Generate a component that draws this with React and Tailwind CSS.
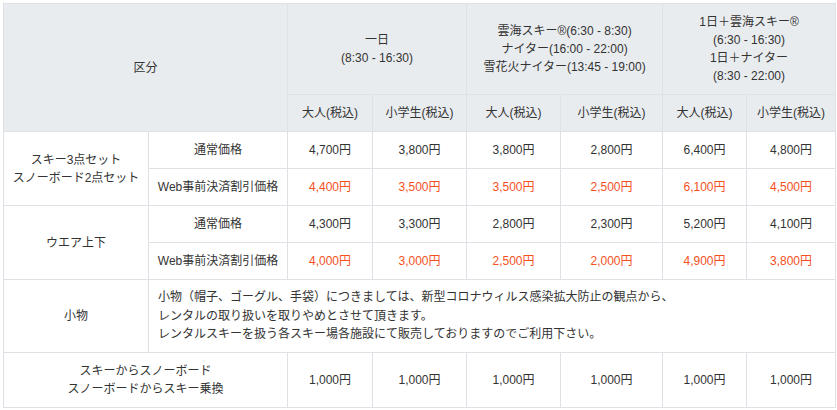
import React from 'react';

const ROWS = [
  {
    group: ['スキー3点セット', 'スノーボード2点セット'],
    items: [
      { label: '通常価格', prices: ['4,700円', '3,800円', '3,800円', '2,800円', '6,400円', '4,800円'] },
      { label: 'Web事前決済割引価格', web: true, prices: ['4,400円', '3,500円', '3,500円', '2,500円', '6,100円', '4,500円'] },
    ],
  },
  {
    group: ['ウエア上下'],
    items: [
      { label: '通常価格', prices: ['4,300円', '3,300円', '2,800円', '2,300円', '5,200円', '4,100円'] },
      { label: 'Web事前決済割引価格', web: true, prices: ['4,000円', '3,000円', '2,500円', '2,000円', '4,900円', '3,800円'] },
    ],
  },
];

const WIDTHS = [145, 139, 85, 94, 94, 102, 84, 89];

const th = 'border border-[#dee2e6] bg-[#e9ecef] font-normal text-center align-middle';
const td = 'border border-[#dee2e6] text-center align-middle';

export default function App() {
  return (
    <div
      className="p-[3px] bg-white text-[#333] text-[12px] leading-[18px]"
      style={{ fontFamily: '"Liberation Sans", "Noto Sans CJK JP", sans-serif' }}
    >
      <table className="table-fixed border-collapse w-[832px]">
        <colgroup>
          {WIDTHS.map((w, i) => (
            <col key={i} style={{ width: w }} />
          ))}
        </colgroup>
        <thead>
          <tr className="h-[91px]">
            <th colSpan={2} rowSpan={2} className={th}>区分</th>
            <th colSpan={2} className={th}>
              一日
              <br />
              (8:30 - 16:30)
            </th>
            <th colSpan={2} className={th}>
              雲海スキー®(6:30 - 8:30)
              <br />
              ナイター(16:00 - 22:00)
              <br />
              雪花火ナイター(13:45 - 19:00)
            </th>
            <th colSpan={2} className={th}>
              1日＋雲海スキー®
              <br />
              (6:30 - 16:30)
              <br />
              1日＋ナイター
              <br />
              (8:30 - 22:00)
            </th>
          </tr>
          <tr className="h-[37px]">
            {['大人(税込)', '小学生(税込)', '大人(税込)', '小学生(税込)', '大人(税込)', '小学生(税込)'].map((t, i) => (
              <th key={i} className={th}>{t}</th>
            ))}
          </tr>
        </thead>
        <tbody>
          {ROWS.map((row) =>
            row.items.map((item, j) => (
              <tr key={row.group[0] + j} className="h-[37px]">
                {j === 0 && (
                  <td rowSpan={2} className={td}>
                    {row.group.map((g, k) => (
                      <div key={k}>{g}</div>
                    ))}
                  </td>
                )}
                <td className={td}>{item.label}</td>
                {item.prices.map((p, k) => (
                  <td key={k} className={`${td} ${item.web ? 'text-[#f4511e]' : ''}`}>{p}</td>
                ))}
              </tr>
            ))
          )}
          <tr className="h-[73px]">
            <td className={td}>小物</td>
            <td colSpan={7} className="border border-[#dee2e6] align-middle text-left px-[9px] leading-[18.5px]">
              小物（帽子、ゴーグル、手袋）につきましては、新型コロナウィルス感染拡大防止の観点から、
              <br />
              レンタルの取り扱いを取りやめとさせて頂きます。
              <br />
              レンタルスキーを扱う各スキー場各施設にて販売しておりますのでご利用下さい。
            </td>
          </tr>
          <tr className="h-[55px]">
            <td colSpan={2} className={td}>
              スキーからスノーボード
              <br />
              スノーボードからスキー乗換
            </td>
            {Array.from({ length: 6 }).map((_, k) => (
              <td key={k} className={td}>1,000円</td>
            ))}
          </tr>
        </tbody>
      </table>
    </div>
  );
}
